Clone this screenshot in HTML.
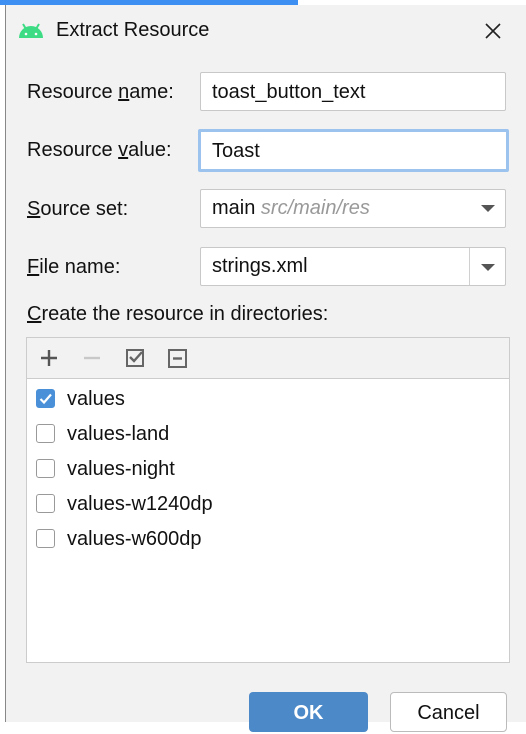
<!DOCTYPE html>
<html><head><style>
body{margin:0;width:526px;height:722px;overflow:hidden;background:#fff;font-family:"Liberation Sans","Noto Sans CJK SC",sans-serif;color:#111;position:relative}
.a{position:absolute}
.dlg{left:5px;top:5px;width:521px;height:717px;background:#f2f2f2;border-left:1px solid #888}
.lbl{font-size:20px;left:27px}
.box{background:#fff;border:1px solid #c8c8c8;border-radius:2px;font-size:20px;box-sizing:border-box;padding-left:11px}
.row{left:36px;font-size:20px}
.cb{position:absolute;left:0;top:1px;width:19px;height:19px;border:1px solid #999;border-radius:3px;background:#fff;box-sizing:border-box}
.arr{width:0;height:0;border-left:7px solid transparent;border-right:7px solid transparent;border-top:7px solid #555}
</style></head><body>
<div class="a" style="left:0;top:0;width:298px;height:5px;background:#3d8ff2"></div>
<div class="a dlg"></div>
<svg class="a" style="left:17px;top:22px" width="28" height="18" viewBox="0 0 28 18"><path d="M2 16 A12 12 0 0 1 26 16 Z" fill="#3ddc84"/><line x1="6" y1="2" x2="9" y2="7" stroke="#3ddc84" stroke-width="2"/><line x1="22" y1="2" x2="19" y2="7" stroke="#3ddc84" stroke-width="2"/><circle cx="9" cy="12" r="1.3" fill="#fff"/><circle cx="19" cy="12" r="1.3" fill="#fff"/></svg>
<div class="a" style="left:56px;top:19px;font-size:20px">Extract Resource</div>
<svg class="a" style="left:484px;top:22px" width="18" height="18"><path d="M2 2L16 16M16 2L2 16" stroke="#222" stroke-width="1.6"/></svg>
<div class="a lbl" style="top:81px">Resource <u>n</u>ame:</div>
<div class="a box" style="left:200px;top:72px;width:306px;height:39px;line-height:39px">toast_button_text</div>
<div class="a lbl" style="top:139px">Resource <u>v</u>alue:</div>
<div class="a box" style="left:198px;top:129px;width:311px;height:43px;line-height:39px;border:3px solid #9cc3ee;padding-left:11px">Toast</div>
<div class="a lbl" style="top:198px"><u>S</u>ource set:</div>
<div class="a box" style="left:200px;top:189px;width:306px;height:39px;line-height:37px">main <i style="color:#999">src/main/res</i></div>
<div class="a arr" style="left:481px;top:205px"></div>
<div class="a lbl" style="top:256px"><u>F</u>ile name:</div>
<div class="a box" style="left:200px;top:247px;width:306px;height:39px;line-height:37px">strings.xml</div>
<div class="a" style="left:469px;top:248px;width:1px;height:37px;background:#d0d0d0"></div>
<div class="a arr" style="left:481px;top:264px"></div>
<div class="a lbl" style="top:303px"><u>C</u>reate the resource in directories:</div>
<div class="a" style="left:26px;top:337px;width:484px;height:326px;background:#fff;border:1px solid #ccc;box-sizing:border-box"></div>
<div class="a" style="left:27px;top:338px;width:482px;height:40px;background:#f2f2f2;border-bottom:1px solid #ccc"></div>
<svg class="a" style="left:38px;top:348px" width="160" height="22">
<path d="M3 10H19M11 2V18" stroke="#555" stroke-width="2.4"/>
<path d="M46 10H62" stroke="#c8c8c8" stroke-width="2.4"/>
<rect x="89" y="2" width="16" height="16" fill="none" stroke="#666" stroke-width="2"/><path d="M92 9l4 4 8-9" stroke="#666" stroke-width="2.4" fill="none"/>
<rect x="131" y="2" width="17" height="17" fill="none" stroke="#666" stroke-width="2"/><path d="M135 10.5H144" stroke="#666" stroke-width="2.4"/>
</svg>
<div class="a row" style="top:388px;width:200px;height:22px"><div class="cb" style="background:#4a90d9;border-color:#4a90d9"><svg width="17" height="17"><path d="M3.5 9l3.5 3.5 7-8" stroke="#fff" stroke-width="2.2" fill="none"/></svg></div><span style="margin-left:31px">values</span></div>
<div class="a row" style="top:423px;width:200px"><div class="cb"></div><span style="margin-left:31px">values-land</span></div>
<div class="a row" style="top:458px;width:200px"><div class="cb"></div><span style="margin-left:31px">values-night</span></div>
<div class="a row" style="top:493px;width:220px"><div class="cb"></div><span style="margin-left:31px">values-w1240dp</span></div>
<div class="a row" style="top:528px;width:220px"><div class="cb"></div><span style="margin-left:31px">values-w600dp</span></div>
<div class="a" style="left:249px;top:692px;width:119px;height:40px;background:#4c89c8;border-radius:4px;color:#fff;font-weight:bold;font-size:20px;text-align:center;line-height:42px">OK</div>
<div class="a" style="left:390px;top:692px;width:117px;height:40px;background:#fff;border:1px solid #bbb;box-sizing:border-box;border-radius:4px;font-size:20px;text-align:center;line-height:40px">Cancel</div>
</body></html>
